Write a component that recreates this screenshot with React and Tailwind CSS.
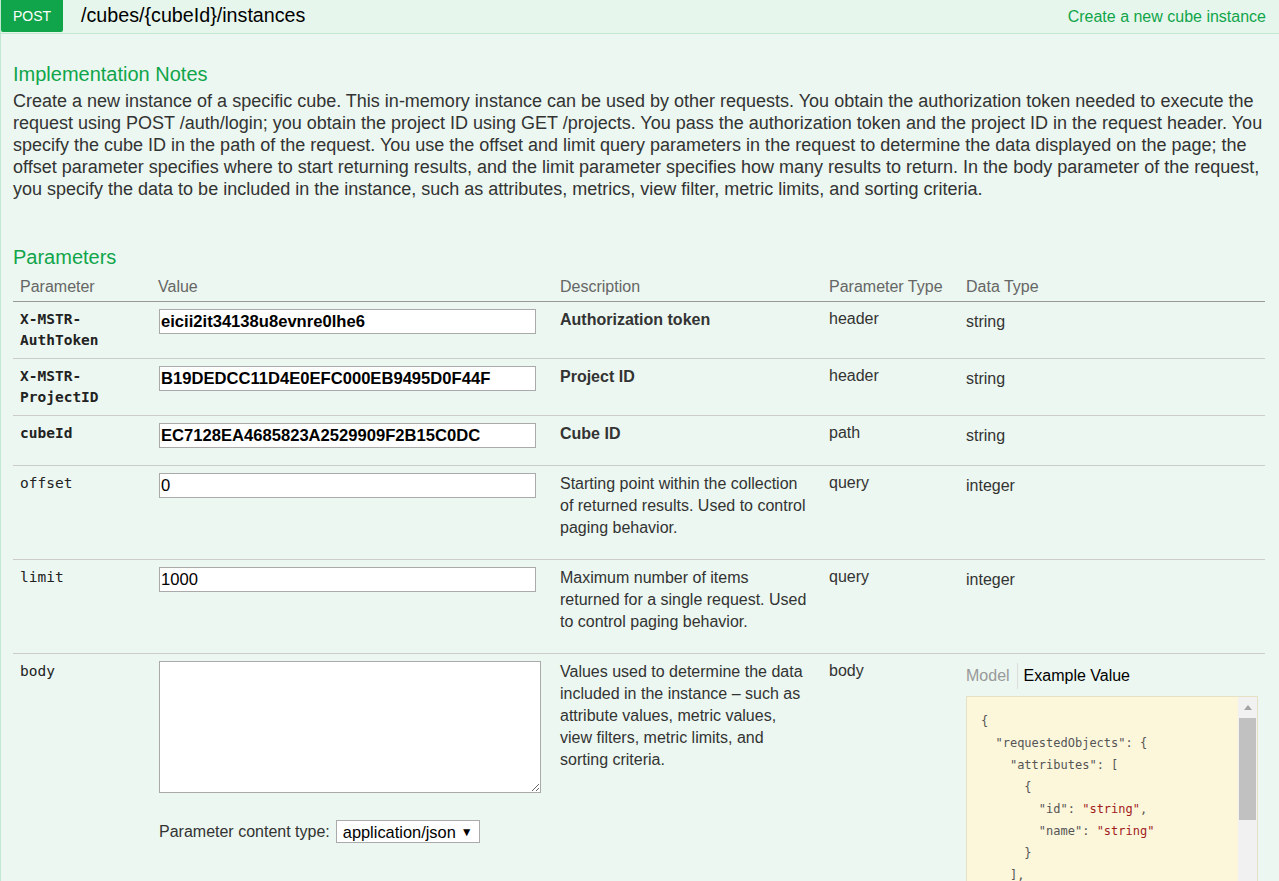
import React from 'react';

const params = [
  { name: ['X-MSTR-', 'AuthToken'], value: 'eicii2it34138u8evnre0lhe6', required: true, desc: 'Authorization token', type: 'header', dataType: 'string' },
  { name: ['X-MSTR-', 'ProjectID'], value: 'B19DEDCC11D4E0EFC000EB9495D0F44F', required: true, desc: 'Project ID', type: 'header', dataType: 'string' },
  { name: ['cubeId'], value: 'EC7128EA4685823A2529909F2B15C0DC', required: true, desc: 'Cube ID', type: 'path', dataType: 'string' },
  { name: ['offset'], value: '0', desc: 'Starting point within the collection of returned results. Used to control paging behavior.', type: 'query', dataType: 'integer' },
  { name: ['limit'], value: '1000', desc: 'Maximum number of items returned for a single request. Used to control paging behavior.', type: 'query', dataType: 'integer' },
];

// [indent, key, value, trailing]
const example = [
  [0, null, null, '{'],
  [1, 'requestedObjects', null, ': {'],
  [2, 'attributes', null, ': ['],
  [3, null, null, '{'],
  [4, 'id', 'string', ','],
  [4, 'name', 'string', ''],
  [3, null, null, '}'],
  [2, null, null, '],'],
  [2, 'metrics', null, ': ['],
  [3, null, null, '{'],
  [4, 'id', 'string', ','],
  [4, 'name', 'string', ''],
  [3, null, null, '}'],
  [2, null, null, ']'],
  [1, null, null, '},'],
];

function ParamName({ lines, required }) {
  return (
    <div className={`font-['DejaVu_Sans_Mono',monospace] text-[14.5px] leading-[21px] text-[#222] ${required ? 'font-bold' : ''}`}>
      {lines.map((l) => (
        <div key={l}>{l}</div>
      ))}
    </div>
  );
}

function ExampleBox() {
  return (
    <div className="mt-[7px] flex h-[400px] border border-[#e5e0c6] bg-[#fcf6db]">
      <div className="flex-1 overflow-hidden pl-[14px] pt-[13px] font-['DejaVu_Sans_Mono',monospace] text-[12px] leading-[22px] text-[#555]">
        {example.map(([indent, key, val, tail], i) => (
          <div key={i} className="whitespace-pre">
            {'  '.repeat(indent)}
            {key && <span>"{key}"</span>}
            {val && (
              <>
                <span>: </span>
                <span className="text-[#a11b1b]">"{val}"</span>
              </>
            )}
            {tail}
          </div>
        ))}
      </div>
      <div className="flex w-[19px] flex-col items-center bg-[#f1f1f1]">
        <div className="mt-[8px] h-0 w-0 border-x-[4px] border-b-[5px] border-x-transparent border-b-[#a3a3a3]" />
        <div className="mt-[8px] h-[102px] w-[17px] bg-[#c1c1c1]" />
      </div>
    </div>
  );
}

export default function App() {
  return (
    <div className="min-h-[881px] bg-white font-['Liberation_Sans',Arial,sans-serif] text-[16px] text-[#333]">
      <div className="border-l border-[#c3e8d1] bg-[#ebf7f0] pb-[40px]">
        {/* heading bar */}
        <div className="flex h-[34px] items-start border-b border-[#c3e8d1] bg-[#e7f6ec]">
          <div className="flex h-[32px] w-[62px] items-center justify-center rounded-b-[2px] bg-[#10a54a] text-[14px] text-white">
            POST
          </div>
          <div className="ml-[18px] mt-[3px] text-[19.7px] leading-[24px] text-black">/cubes/{'{cubeId}'}/instances</div>
          <div className="ml-auto mt-[6px] pr-[13px] text-[16px] leading-[22px] text-[#10a54a]">Create a new cube instance</div>
        </div>

        <div className="pl-[12px] pr-[14px]">
          <h3 className="pt-[28px] text-[20px] leading-[24px] text-[#10a54a]">Implementation Notes</h3>
          <p className="mt-[4px] text-[18px] leading-[22px]">
            Create a new instance of a specific cube. This in-memory instance can be used by other requests. You obtain the
            authorization token needed to execute the request using POST /auth/login; you obtain the project ID using GET
            /projects. You pass the authorization token and the project ID in the request header. You specify the cube ID in
            the path of the request. You use the offset and limit query parameters in the request to determine the data
            displayed on the page; the offset parameter specifies where to start returning results, and the limit parameter
            specifies how many results to return. In the body parameter of the request, you specify the data to be included
            in the instance, such as attributes, metrics, view filter, metric limits, and sorting criteria.
          </p>

          <h3 className="mt-[45px] text-[20px] leading-[24px] text-[#10a54a]">Parameters</h3>

          {/* table head */}
          <div className="grid grid-cols-[138px_402px_269px_137px_1fr] border-b border-[#999] pb-[3px] pt-[7px] leading-[22px] text-[#666]">
            <div className="px-[7px]">Parameter</div>
            <div className="px-[7px]">Value</div>
            <div className="px-[7px]">Description</div>
            <div className="px-[7px]">Parameter Type</div>
            <div className="px-[7px]">Data Type</div>
          </div>

          {params.map((p) => (
            <div key={p.name.join('')} className="grid grid-cols-[138px_402px_269px_137px_1fr] border-b border-[#ccc] py-[7px] leading-[22px]">
              <div className="px-[7px]">
                <ParamName lines={p.name} required={p.required} />
              </div>
              <div className="px-[7px]">
                <input
                  readOnly
                  value={p.value}
                  className={`ml-[1px] block h-[25px] w-[377px] border border-[#aaa] bg-white px-[1px] text-[16.6px] text-black outline-none ${p.required ? 'font-bold' : ''}`}
                />
              </div>
              <div className="pl-[7px] pr-[12px]">
                <p className={`mb-[13px] ${p.required ? 'font-bold' : ''}`}>{p.desc}</p>
              </div>
              <div className="px-[7px] leading-[20px]">{p.type}</div>
              <div className="px-[7px] pt-[2px]">{p.dataType}</div>
            </div>
          ))}

          {/* body row */}
          <div className="grid grid-cols-[138px_402px_269px_137px_1fr] pt-[7px] leading-[22px]">
            <div className="px-[7px]">
              <ParamName lines={['body']} />
            </div>
            <div className="px-[7px]">
              <textarea readOnly className="ml-[1px] block h-[132px] w-[382px] border border-[#aaa] bg-white outline-none" />
              <div className="mt-[27px] flex items-center">
                <span className="ml-[1px]">Parameter content type:</span>
                <div className="ml-[6px] flex h-[23px] items-center border border-[#aaa] bg-white pl-[6px] pr-[6px] text-[16.4px] text-black">
                  application/json
                  <span className="ml-[5px] text-[12px]">▼</span>
                </div>
              </div>
            </div>
            <div className="pl-[7px] pr-[12px]">
              Values used to determine the data included in the instance – such as attribute values, metric values, view
              filters, metric limits, and sorting criteria.
            </div>
            <div className="px-[7px] leading-[20px]">body</div>
            <div className="px-[7px] pt-[2px]">
              <div className="flex h-[26px] items-center">
                <span className="pr-[7px] text-[#999]">Model</span>
                <span className="h-full border-l border-[#ddd]" />
                <span className="pl-[6px] text-black">Example Value</span>
              </div>
              <ExampleBox />
            </div>
          </div>
        </div>
      </div>
    </div>
  );
}
